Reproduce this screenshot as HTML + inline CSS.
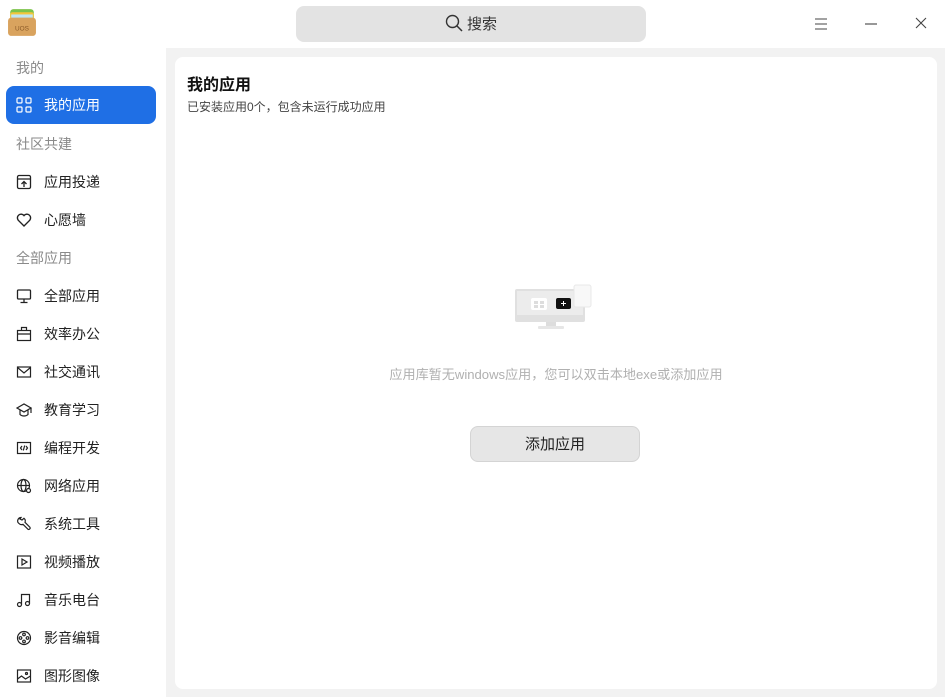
<!DOCTYPE html>
<html><head><meta charset="utf-8"><style>
*{margin:0;padding:0;box-sizing:border-box}
body{width:945px;height:697px;overflow:hidden;background:#f2f2f2;font-family:"Liberation Sans","Noto Sans CJK SC",sans-serif;position:relative}
.top{position:absolute;left:0;top:0;width:945px;height:48px;background:#fff}
.side{position:absolute;left:0;top:48px;width:166px;height:649px;background:#fff}
.hdr{position:absolute;left:16px;font-size:14px;color:#8a8a8a;line-height:20px}
.it{position:absolute;left:6px;width:150px;height:38px;border-radius:8px;font-size:14px;color:#222;line-height:38px;padding-left:38px}
.it svg{position:absolute;left:10px;top:11px}
.sel{background:#1f6fe5;color:#fff}
.card{position:absolute;left:175px;top:57px;width:762px;height:632px;background:#fff;border-radius:8px}
</style></head><body>
<div class="top">
 <svg style="position:absolute;left:8px;top:8px" width="28" height="29" viewBox="0 0 26 27">
  <rect x="2" y="1" width="22" height="10" rx="3" fill="#7cc34a"/>
  <rect x="2" y="4" width="22" height="8" rx="2" fill="#f3c63c"/>
  <rect x="3" y="6" width="20" height="6" fill="#bfe6f5"/>
  <rect x="0" y="9" width="26" height="17" rx="3" fill="#d9a35e"/>
  <text x="13" y="21" font-size="6" fill="#8a5a28" text-anchor="middle" font-family="Liberation Sans">UOS</text>
 </svg>
 <div style="position:absolute;left:296px;top:6px;width:350px;height:36px;background:#e3e3e3;border-radius:8px;text-align:center;line-height:38px;font-size:15px;color:#333">
  <svg width="18" height="18" viewBox="0 0 18 18" style="vertical-align:-3px;margin-right:4px"><circle cx="7.5" cy="7.5" r="6" fill="none" stroke="#333" stroke-width="1.4"/><path d="M12 12l5 5" stroke="#333" stroke-width="1.5"/></svg>搜索</div>
 <svg style="position:absolute;left:814px;top:17px" width="14" height="14"><path d="M1 2h12M1 7h12M1 12h12" stroke="#444" stroke-width="1.1"/></svg>
 <svg style="position:absolute;left:864px;top:17px" width="14" height="14"><path d="M1 7h12" stroke="#444" stroke-width="1.1"/></svg>
 <svg style="position:absolute;left:914px;top:16px" width="14" height="14"><path d="M2 2l10 10M12 2L2 12" stroke="#444" stroke-width="1.1"/></svg>
</div>
<div class="side">
 <div class="hdr" style="top:10px">我的</div>
 <div class="it sel" style="top:38px"><svg width="16" height="16" fill="none" stroke="#fff" stroke-width="1.2"><rect x="1" y="1" width="5" height="5" rx="1"/><rect x="10" y="1" width="5" height="5" rx="1"/><rect x="1" y="10" width="5" height="5" rx="1"/><rect x="10" y="10" width="5" height="5" rx="1"/></svg>我的应用</div>
 <div class="hdr" style="top:86px">社区共建</div>
 <div class="it" style="top:115px"><svg width="16" height="16" fill="none" stroke="#222" stroke-width="1.3"><rect x="1.5" y="1.5" width="13" height="13" rx="1.5"/><path d="M1.5 5h13M8 13V7.5M5.5 10L8 7.5l2.5 2.5"/></svg>应用投递</div>
 <div class="it" style="top:153px"><svg width="16" height="16" fill="none" stroke="#222" stroke-width="1.4"><path d="M8 14L2.2 8.2A3.3 3.3 0 0 1 8 3.6a3.3 3.3 0 0 1 5.8 4.6z"/></svg>心愿墙</div>
 <div class="hdr" style="top:200px">全部应用</div>
 <div class="it" style="top:229px"><svg width="16" height="16" fill="none" stroke="#222" stroke-width="1.3"><rect x="1.5" y="2" width="13" height="9" rx="1"/><path d="M8 11v3M4.5 14.5h7"/></svg>全部应用</div>
 <div class="it" style="top:267px"><svg width="16" height="16" fill="none" stroke="#222" stroke-width="1.2"><rect x="1.5" y="4.5" width="13" height="10"/><path d="M5.5 4.5v-3h5v3M1.5 8h13"/></svg>效率办公</div>
 <div class="it" style="top:305px"><svg width="16" height="16" fill="none" stroke="#222" stroke-width="1.2"><rect x="1.5" y="3" width="13" height="10"/><path d="M1.5 3.5L8 9l6.5-5.5"/></svg>社交通讯</div>
 <div class="it" style="top:343px"><svg width="16" height="16" fill="none" stroke="#222" stroke-width="1.2"><path d="M1 6l7-4 7 4-7 4zM4 8v4.5c2 2 6 2 8 0V8M15 6v5"/></svg>教育学习</div>
 <div class="it" style="top:381px"><svg width="16" height="16" fill="none" stroke="#222" stroke-width="1.2"><rect x="1.5" y="2.5" width="13" height="11"/><path d="M6 6L4.5 8 6 10M10 6l1.5 2L10 10M8.7 5.5L7.3 10.5"/></svg>编程开发</div>
 <div class="it" style="top:419px"><svg width="16" height="16" fill="none" stroke="#222" stroke-width="1.2"><circle cx="7.5" cy="7.5" r="6"/><ellipse cx="7.5" cy="7.5" rx="2.5" ry="6"/><path d="M1.5 7.5h12"/><circle cx="12.5" cy="12.5" r="2" fill="#fff"/></svg>网络应用</div>
 <div class="it" style="top:457px"><svg width="16" height="16" fill="none" stroke="#222" stroke-width="1.2"><path d="M5 1.5a3.5 3.5 0 0 0-3 5l1 1a3.5 3.5 0 0 0 4 .8l5 5a1.5 1.5 0 0 0 2-2l-5-5a3.5 3.5 0 0 0-1-4L6 4 4 3z"/></svg>系统工具</div>
 <div class="it" style="top:495px"><svg width="16" height="16" fill="none" stroke="#222" stroke-width="1.2"><rect x="1.5" y="2" width="13" height="12"/><path d="M6 5v6l5-3z"/></svg>视频播放</div>
 <div class="it" style="top:533px"><svg width="16" height="16" fill="none" stroke="#222" stroke-width="1.2"><path d="M5.5 12.5V2.5h8v9"/><circle cx="3.5" cy="12.5" r="2"/><circle cx="11.5" cy="11.5" r="2"/></svg>音乐电台</div>
 <div class="it" style="top:571px"><svg width="16" height="16" fill="none" stroke="#222" stroke-width="1.2"><circle cx="8" cy="8" r="6.5"/><circle cx="8" cy="4.5" r="1.3"/><circle cx="8" cy="11.5" r="1.3"/><circle cx="4.5" cy="8" r="1.3"/><circle cx="11.5" cy="8" r="1.3"/></svg>影音编辑</div>
 <div class="it" style="top:609px"><svg width="16" height="16" fill="none" stroke="#222" stroke-width="1.2"><rect x="1.5" y="2" width="13" height="12"/><path d="M1.5 11l4-3 4 3 5-3"/><circle cx="10.5" cy="5.5" r="1"/></svg>图形图像</div>
</div>
<div class="card">
 <div style="position:absolute;left:12px;top:14px;font-size:16px;font-weight:bold;color:#111">我的应用</div>
 <div style="position:absolute;left:12px;top:41px;font-size:12px;color:#444">已安装应用0个，包含未运行成功应用</div>
 <svg style="position:absolute;left:338px;top:224px" width="84" height="52" viewBox="0 0 84 52">
  <rect x="2" y="8" width="70" height="33" rx="2" fill="#e0e0e0"/>
  <rect x="4" y="10" width="66" height="24" fill="#ececec"/>
  <rect x="33" y="41" width="10" height="5" fill="#ddd"/>
  <rect x="25" y="45" width="26" height="3" rx="1" fill="#e6e6e6"/>
  <rect x="18" y="17" width="16" height="12" rx="2" fill="#fff"/>
  <rect x="21" y="20" width="4" height="3" fill="#ddd"/><rect x="27" y="20" width="4" height="3" fill="#ddd"/>
  <rect x="21" y="24" width="4" height="3" fill="#ddd"/><rect x="27" y="24" width="4" height="3" fill="#ddd"/>
  <rect x="43" y="17" width="15" height="11" rx="2" fill="#111"/>
  <path d="M48 22.5h5M50.5 20v5" stroke="#fff" stroke-width="1"/>
  <rect x="61" y="4" width="17" height="22" rx="2" fill="#f8f8f8" stroke="#e8e8e8"/>
 </svg>
 <div style="position:absolute;left:0;width:762px;top:307px;text-align:center;font-size:13.1px;color:#b0b0b0">应用库暂无windows应用，您可以双击本地exe或添加应用</div>
 <div style="position:absolute;left:295px;top:369px;width:170px;height:36px;background:#e6e6e6;border:1px solid #d4d4d4;border-radius:8px;text-align:center;line-height:36px;font-size:15px;color:#222">添加应用</div>
</div>
</body></html>
